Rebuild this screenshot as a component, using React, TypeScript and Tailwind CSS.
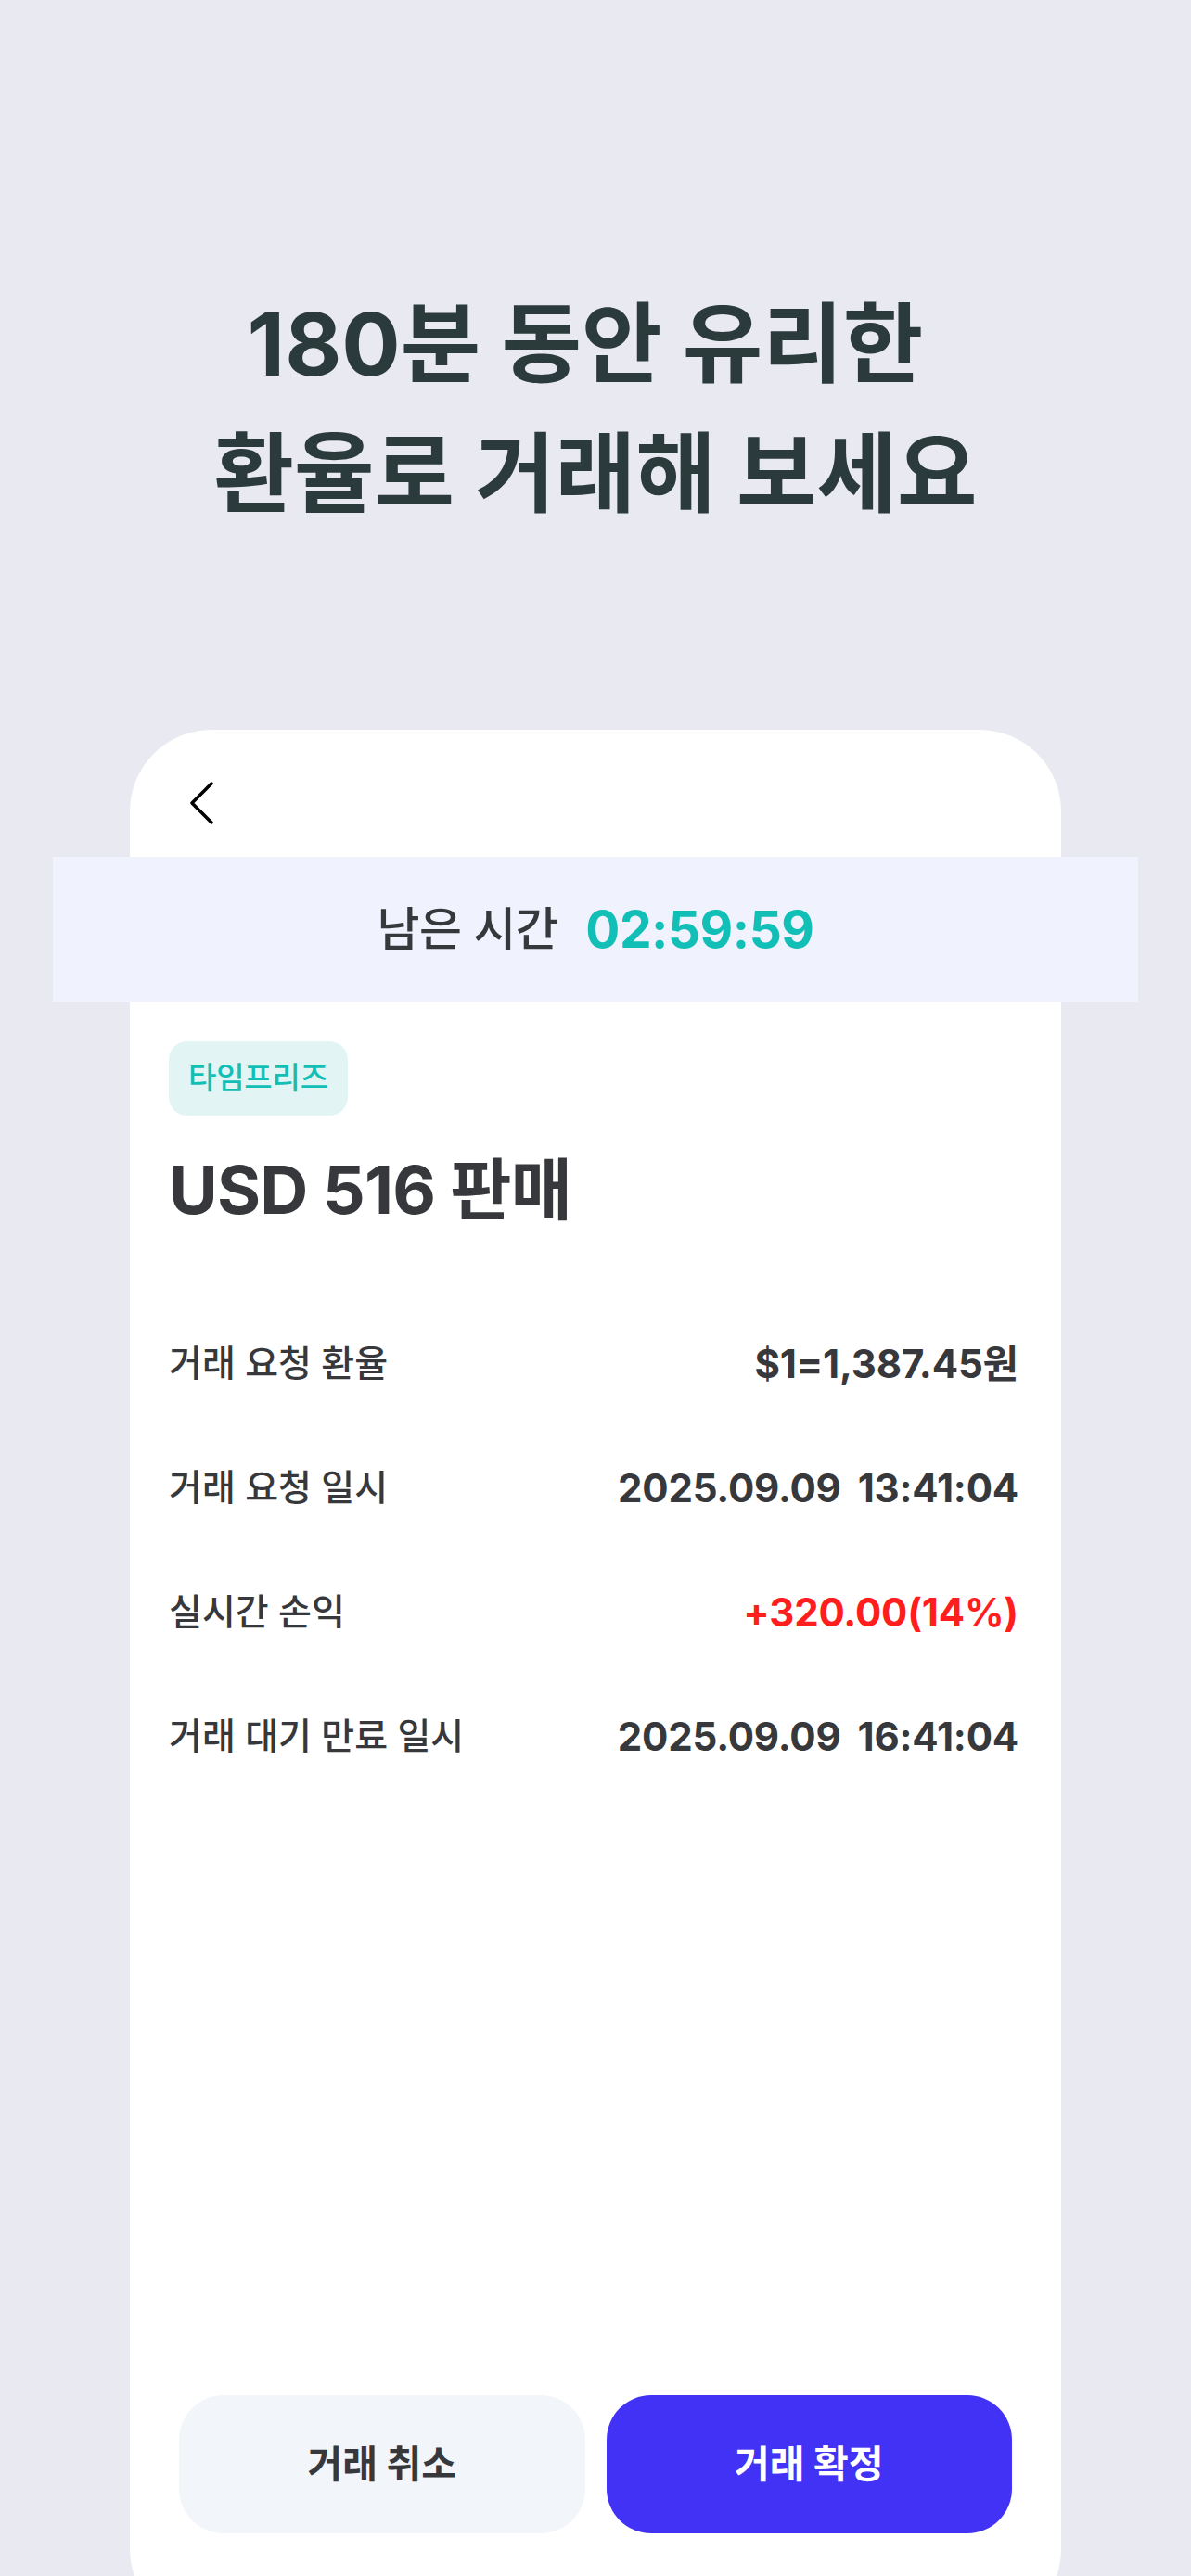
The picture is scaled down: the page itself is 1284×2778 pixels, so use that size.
const rows = [
  { label: '거래 요청 환율', value: '$1=1,387.45원' },
  { label: '거래 요청 일시', value: ['2025.09.09', '13:41:04'] },
  { label: '실시간 손익', value: '+320.00(14%)', red: true },
  { label: '거래 대기 만료 일시', value: ['2025.09.09', '16:41:04'] },
]

function BackIcon() {
  return (
    <svg width="26" height="46" viewBox="0 0 26 46" fill="none">
      <polyline
        points="23,2 2,23 23,44"
        stroke="#000"
        strokeWidth="3.5"
        strokeLinecap="round"
        strokeLinejoin="round"
      />
    </svg>
  )
}

export default function App() {
  return (
    <div
      className="h-[2778px] overflow-hidden bg-[#e9e9f1] flex flex-col items-center"
      style={{ fontFamily: "Inter, 'Noto Sans CJK KR', sans-serif" }}
    >
      {/* headline */}
      <h1 className="pt-[301px] text-center text-[94px] leading-[140px] font-bold text-[#2b3a3a]">
        180분 동안 유리한{'\u00a0'}
        <br />
        환율로 거래해 보세요
      </h1>

      {/* phone card */}
      <div className="mt-[206px] w-[1004px] h-[2050px] shrink-0 rounded-[88px] bg-white flex flex-col">
        <div className="h-[137px] pt-[56px] pl-[65px]">
          <BackIcon />
        </div>

        <div className="-mx-[83px] h-[157px] bg-[#f0f3fe] flex items-center justify-center gap-[30px]">
          <span className="text-[50px] font-medium tracking-[-0.5px] text-[#37383c]">남은 시간</span>
          <span className="text-[55px] font-bold tracking-[-0.5px] text-[#12bfb6]">02:59:59</span>
        </div>

        <div className="pl-[42px] pr-[46px]">
          <div className="mt-[42px] inline-flex h-[80px] items-center rounded-[20px] bg-[#e2f4f3] px-[21px]">
            <span className="text-[33px] font-medium tracking-[-0.2px] text-[#12bfb6]">타임프리즈</span>
          </div>

          <h2 className="mt-[35px] text-[72px] leading-[90px] font-bold tracking-[-0.8px] text-[#37383c]">
            USD 516 판매
          </h2>

          <div className="mt-[75px]">
            {rows.map((r) => (
              <div key={r.label} className="flex h-[134px] items-center justify-between">
                <span className="text-[39px] font-medium tracking-[0px] text-[#37383c]">{r.label}</span>
                <span
                  className={`flex gap-[18px] text-[42px] font-bold tracking-[-0.2px] ${
                    r.red ? 'text-[#ff1d1d]' : 'text-[#37383c]'
                  }`}
                >
                  {Array.isArray(r.value) ? (
                    <>
                      <span>{r.value[0]}</span>
                      <span>{r.value[1]}</span>
                    </>
                  ) : (
                    <span>{r.value}</span>
                  )}
                </span>
              </div>
            ))}
          </div>
        </div>

        <div className="mt-auto flex gap-[23px] px-[53px] pb-[105px]">
          <button className="flex-1 h-[149px] rounded-[48px] bg-[#f2f5fa] text-[41px] font-bold text-[#37383c]">
            거래 취소
          </button>
          <button className="flex-1 h-[149px] rounded-[48px] bg-[#4232f6] text-[41px] font-bold text-white">
            거래 확정
          </button>
        </div>
      </div>
    </div>
  )
}
